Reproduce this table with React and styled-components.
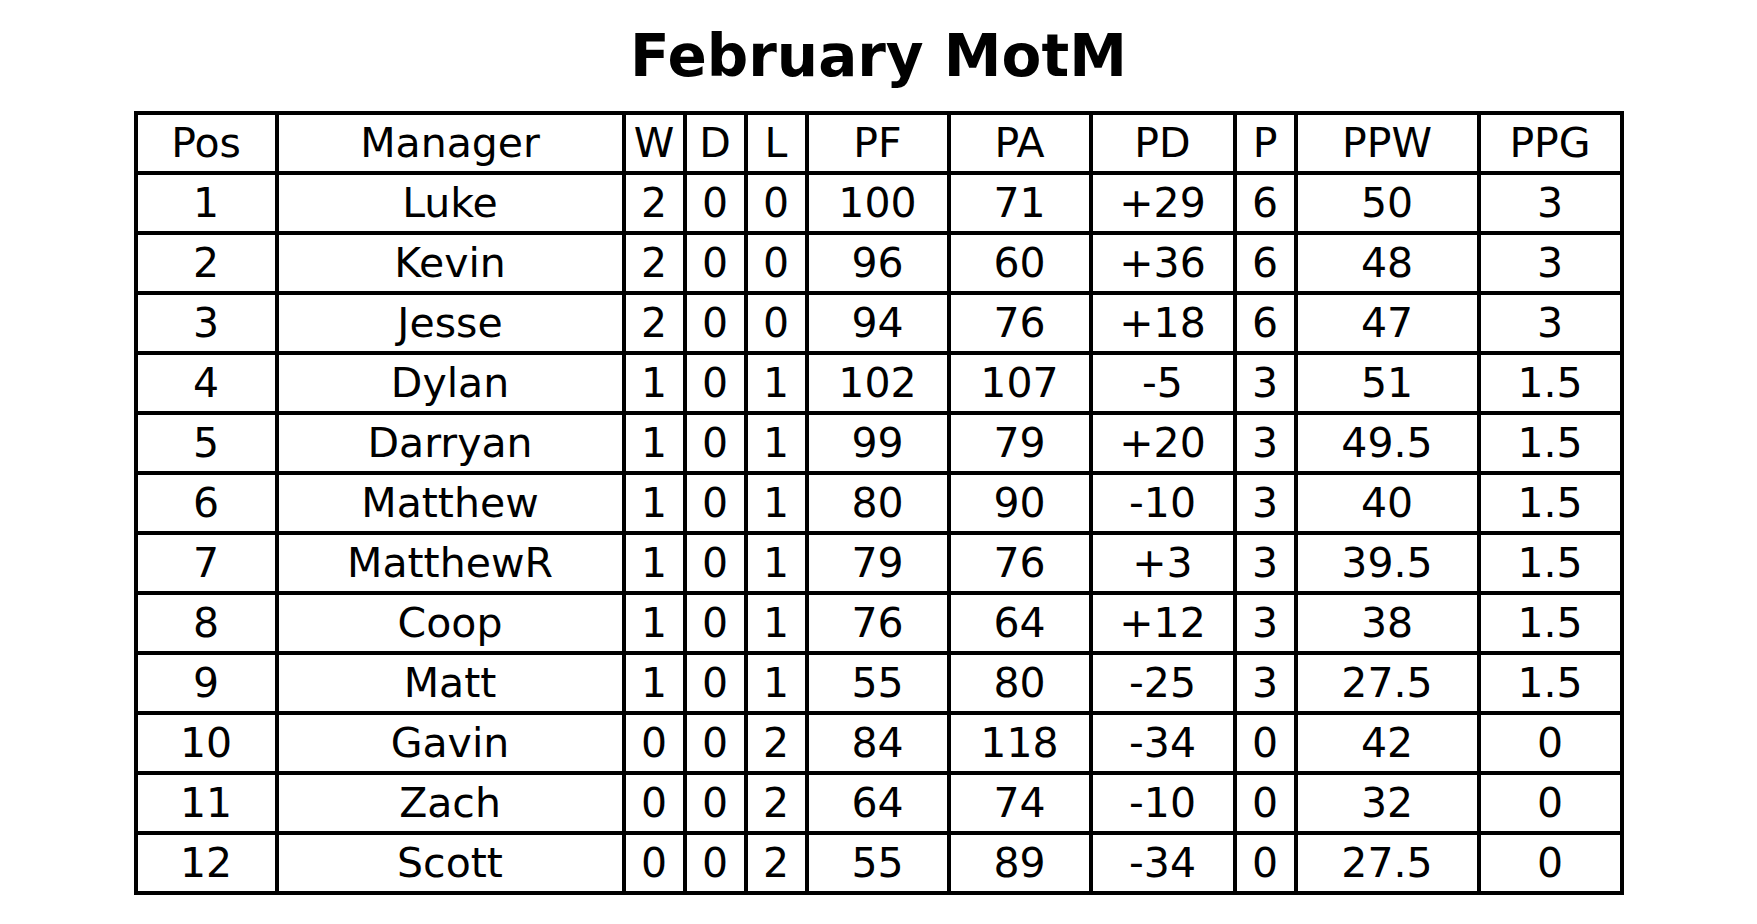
import styled, { createGlobalStyle } from "styled-components";

const GlobalStyle = createGlobalStyle`
  html, body {
    margin: 0;
    padding: 0;
    background: #ffffff;
  }
  body {
    font-family: "DejaVu Sans", "Liberation Sans", sans-serif;
    color: #000000;
  }
`;

const COLUMNS = [
  { key: "pos", label: "Pos", width: 141 },
  { key: "manager", label: "Manager", width: 347 },
  { key: "w", label: "W", width: 61 },
  { key: "d", label: "D", width: 61 },
  { key: "l", label: "L", width: 61 },
  { key: "pf", label: "PF", width: 142 },
  { key: "pa", label: "PA", width: 142 },
  { key: "pd", label: "PD", width: 144 },
  { key: "p", label: "P", width: 61 },
  { key: "ppw", label: "PPW", width: 183 },
  { key: "ppg", label: "PPG", width: 143 },
];

// pos, manager, w, d, l, pf, pa, pd, p, ppw, ppg
const ROWS = [
  ["1", "Luke", "2", "0", "0", "100", "71", "+29", "6", "50", "3"],
  ["2", "Kevin", "2", "0", "0", "96", "60", "+36", "6", "48", "3"],
  ["3", "Jesse", "2", "0", "0", "94", "76", "+18", "6", "47", "3"],
  ["4", "Dylan", "1", "0", "1", "102", "107", "-5", "3", "51", "1.5"],
  ["5", "Darryan", "1", "0", "1", "99", "79", "+20", "3", "49.5", "1.5"],
  ["6", "Matthew", "1", "0", "1", "80", "90", "-10", "3", "40", "1.5"],
  ["7", "MatthewR", "1", "0", "1", "79", "76", "+3", "3", "39.5", "1.5"],
  ["8", "Coop", "1", "0", "1", "76", "64", "+12", "3", "38", "1.5"],
  ["9", "Matt", "1", "0", "1", "55", "80", "-25", "3", "27.5", "1.5"],
  ["10", "Gavin", "0", "0", "2", "84", "118", "-34", "0", "42", "0"],
  ["11", "Zach", "0", "0", "2", "64", "74", "-10", "0", "32", "0"],
  ["12", "Scott", "0", "0", "2", "55", "89", "-34", "0", "27.5", "0"],
];

const App = () => {
  return (
    <S.Page>
      <GlobalStyle />
      <S.Title>February MotM</S.Title>
      <S.Table cols={COLUMNS.map((c) => `${c.width}px`).join(" ")}>
        {COLUMNS.map((col) => (
          <S.Cell key={col.key}>{col.label}</S.Cell>
        ))}
        {ROWS.map((row) =>
          row.map((value, i) => (
            <S.Cell key={`${row[0]}-${COLUMNS[i].key}`}>{value}</S.Cell>
          ))
        )}
      </S.Table>
    </S.Page>
  );
};

export default App;

const Page = styled.div`
  width: 1757px;
  height: 924px;
  display: flex;
  flex-direction: column;
  align-items: center;
  padding-top: 22px;
  box-sizing: border-box;
`;

const Title = styled.h1`
  margin: 0;
  font-family: "DejaVu Sans", sans-serif;
  font-weight: bold;
  font-size: 58px;
  line-height: 68px;
  color: #000;
`;

const Table = styled.div`
  display: grid;
  grid-template-columns: ${({ cols }) => cols};
  grid-auto-rows: 60px;
  margin-top: 21px;
  border-left: 4px solid #000;
  border-top: 4px solid #000;
`;

const Cell = styled.div`
  display: flex;
  align-items: center;
  justify-content: center;
  box-sizing: border-box;
  border-right: 4px solid #000;
  border-bottom: 4px solid #000;
  font-family: "DejaVu Sans", sans-serif;
  font-size: 41px;
  line-height: 48px;
  white-space: nowrap;
  overflow: hidden;
`;

const S = {
  Page,
  Title,
  Table,
  Cell,
};
